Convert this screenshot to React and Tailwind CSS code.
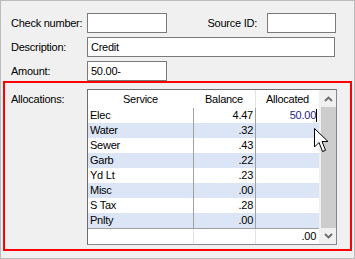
import React from "react";

const rows = [
  { name: "Elec", bal: "4.47", alloc: "50.00", editing: true },
  { name: "Water", bal: ".32" },
  { name: "Sewer", bal: ".43" },
  { name: "Garb", bal: ".22" },
  { name: "Yd Lt", bal: ".23" },
  { name: "Misc", bal: ".00" },
  { name: "S Tax", bal: ".28" },
  { name: "Pnlty", bal: ".00" },
];

const Field = ({ w, value }) => (
  <div className={`${w} h-[20px] border border-[#7a7a7a] bg-white pl-[3px] leading-[18px]`}>
    {value}
  </div>
);

const Chevron = ({ up }) => (
  <svg width="9" height="6" viewBox="0 0 9 6">
    <path
      d={up ? "M1 5 L4.5 1.5 L8 5" : "M1 1 L4.5 4.5 L8 1"}
      fill="none"
      stroke="#6b6b6b"
      strokeWidth="1.8"
    />
  </svg>
);

const Cursor = () => (
  <svg width="15" height="25" viewBox="0 0 15 25" className="absolute left-[226px] top-[38px]">
    <path
      d="M0.5 0.5 L0.5 19 L5 14.5 L8.5 23.5 L11.5 22.3 L8 13.5 L14 13.5 Z"
      fill="#fff"
      stroke="#000"
      strokeWidth="1"
      strokeLinejoin="miter"
    />
  </svg>
);

export default function App() {
  return (
    <div className="w-[355px] h-[259px] border border-[#bcbcbc] bg-[#f0f0f0] font-['Liberation_Sans',Arial,sans-serif] text-[11px] tracking-[-0.25px] text-black overflow-hidden">
      {/* header fields */}
      <div className="pt-[12px] pl-[10px] flex flex-col gap-[4px]">
        <div className="flex items-center">
          <div className="w-[76px]">Check number:</div>
          <Field w="w-[80px]" />
          <div className="w-[100px] text-right pr-[10px]">Source ID:</div>
          <Field w="w-[69px]" />
        </div>
        <div className="flex items-center">
          <div className="w-[76px]">Description:</div>
          <Field w="w-[248px]" value="Credit" />
        </div>
        <div className="flex items-center">
          <div className="w-[76px]">Amount:</div>
          <Field w="w-[80px]" value="50.00-" />
        </div>
      </div>

      {/* allocations */}
      <div className="ml-[2px] w-[349px] h-[170px] border-2 border-[#ff0000] flex pl-[6px] pt-[6px]">
        <div className="w-[76px] mt-[3px] leading-[14px]">Allocations:</div>
        <div className="relative w-[250px] h-[156px] border border-[#828790] border-l-[#6e6e6e] border-t-[#6e6e6e] bg-white flex">
          <div className="w-[231px] flex flex-col">
            <div className="flex h-[18px] leading-[18px]">
              <div className="w-[105px] text-center">Service</div>
              <div className="w-[62px] text-center">Balance</div>
              <div className="w-[64px] text-center border-l border-[#e3e3e3]">Allocated</div>
            </div>
            {rows.map((r, i) => (
              <div
                key={r.name}
                className={`flex h-[15px] leading-[15px] ${i % 2 === 1 ? "bg-[#dbe5f5]" : "bg-white"}`}
              >
                <div className="w-[105px] pl-[2px]">{r.name}</div>
                <div className="w-[62px] border-l border-[#a0a0a0] text-right pr-[2px]">{r.bal}</div>
                <div className="w-[64px] border-l border-[#a0a0a0] flex justify-end items-center pr-[2px]">
                  {r.editing && (
                    <>
                      <span className="text-[#1f1f8a]">{r.alloc}</span>
                      <span className="w-px h-[13px] bg-black" />
                    </>
                  )}
                </div>
              </div>
            ))}
            <div className="flex flex-1 border-t border-[#a0a0a0] leading-[15px]">
              <div className="w-[105px]" />
              <div className="w-[62px] border-l border-[#e3e3e3]" />
              <div className="w-[64px] border-l border-[#e3e3e3] text-right pr-[3px]">.00</div>
            </div>
          </div>
          <div className="w-[17px] flex flex-col bg-[#f0f0f0]">
            <div className="h-[17px] flex items-center justify-center pl-[2px]">
              <Chevron up />
            </div>
            <div className="flex-1 pl-[2px]">
              <div className="h-full bg-[#cdcdcd]" />
            </div>
            <div className="h-[16px] flex items-center justify-center pl-[2px]">
              <Chevron />
            </div>
          </div>
          <Cursor />
        </div>
      </div>
    </div>
  );
}
